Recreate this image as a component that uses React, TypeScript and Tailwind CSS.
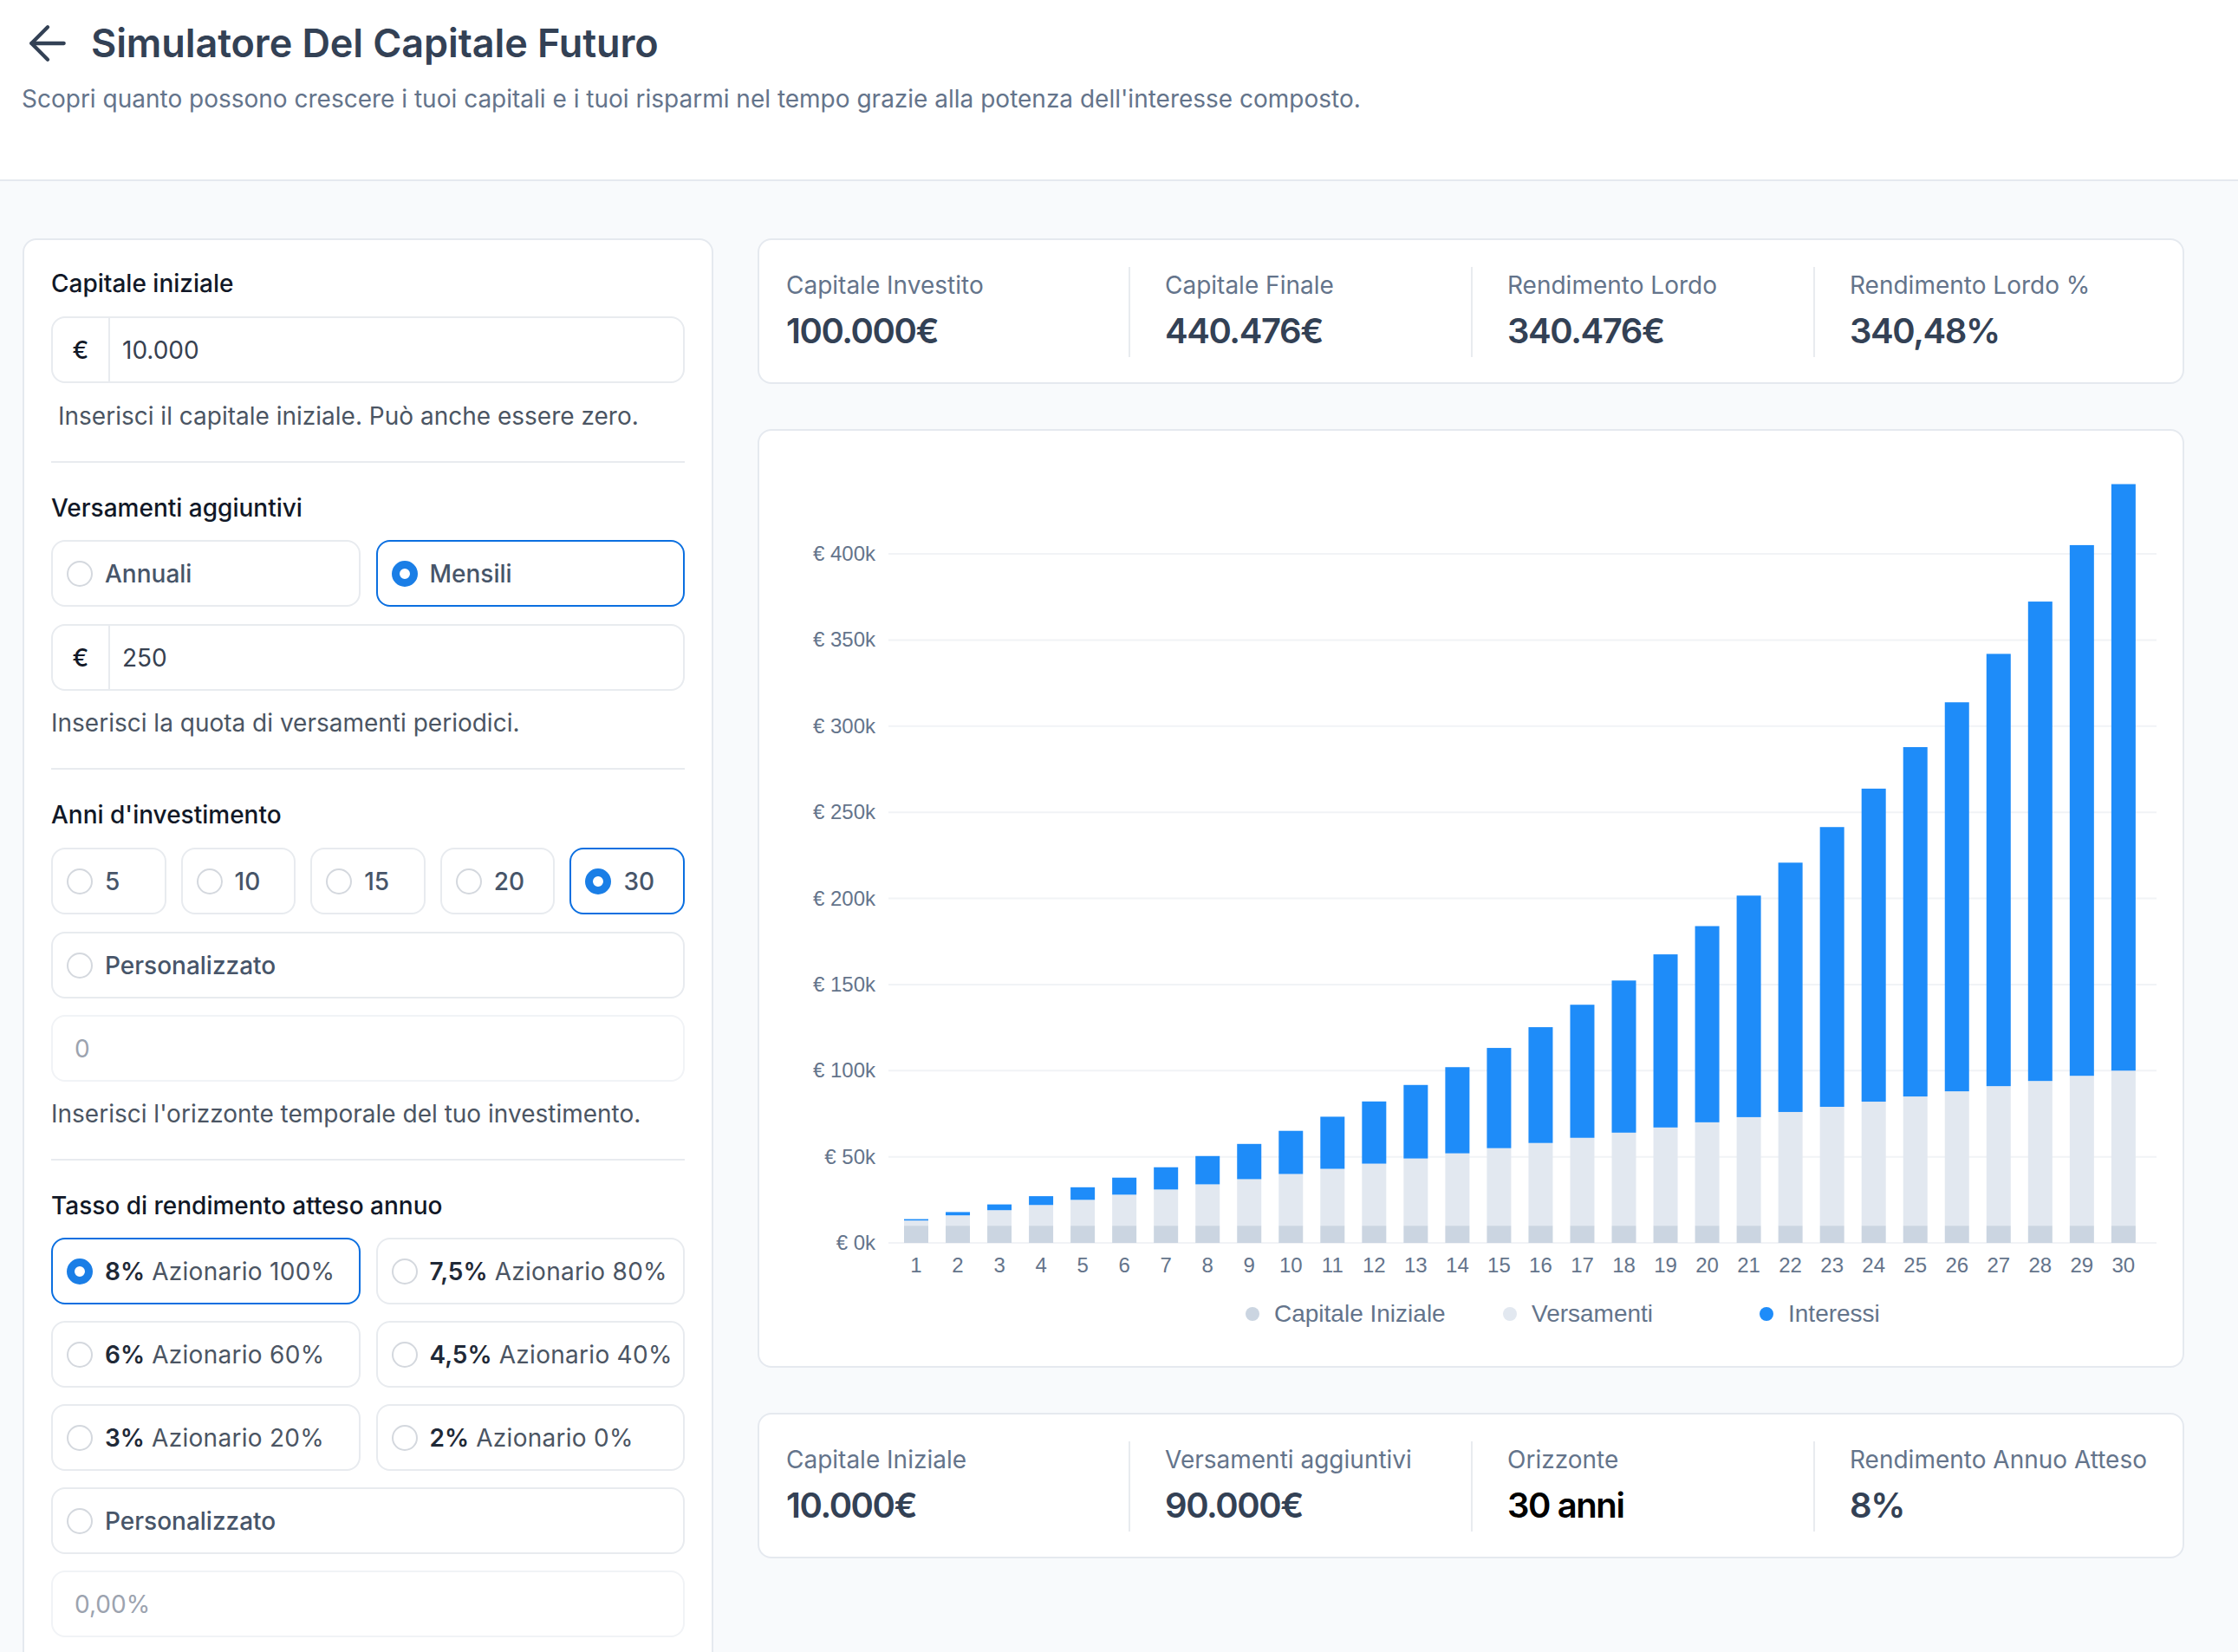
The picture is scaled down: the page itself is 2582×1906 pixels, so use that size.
import { ArrowLeft } from 'lucide-react';

const font = { fontFamily: 'Inter, "Noto Sans", sans-serif' };

const years = Array.from({ length: 30 }, (_, i) => i + 1);

const totalAt = (n: number) => 10000 * Math.pow(1.08, n) + 3000 * ((Math.pow(1.08, n) - 1) / 0.08);

// chart geometry (px inside the chart card)
const yOf = (v: number) => 937 - v * 0.0019875;
const xOf = (i: number) => 181 + 48.03 * i;

function Radio({ checked }: { checked?: boolean }) {
    return checked ? (
        <span className="w-[30px] h-[30px] rounded-full border-[9px] border-[#1a7ee6] bg-white shrink-0" />
    ) : (
        <span className="w-[30px] h-[30px] rounded-full border-2 border-[#d4d8de] bg-white shrink-0" />
    );
}

function Option({ checked, children, className = '' }: { checked?: boolean; children: React.ReactNode; className?: string }) {
    return (
        <div
            className={
                'flex items-center h-[77px] rounded-[16px] px-[16px] gap-[14px] bg-white ' +
                (checked ? 'border-2 border-[#0b6fe0] ' : 'border-2 border-[#e8ebef] ') +
                className
            }
        >
            <Radio checked={checked} />
            <span className="text-[28px] text-[#475569] font-medium">{children}</span>
        </div>
    );
}

function EuroInput({ value }: { value: string }) {
    return (
        <div className="flex h-[77px] rounded-[16px] border-2 border-[#e8ebef] bg-white overflow-hidden">
            <div className="w-[66px] flex items-center justify-center border-r-2 border-[#e8ebef] text-[28px] text-[#111827] font-medium">€</div>
            <div className="flex items-center pl-[14px] text-[28px] text-[#374151]">{value}</div>
        </div>
    );
}

function RateOption({ checked, rate, label }: { checked?: boolean; rate: string; label: string }) {
    return (
        <div
            className={
                'flex items-center h-[77px] rounded-[16px] px-[16px] gap-[14px] bg-white ' +
                (checked ? 'border-2 border-[#0b6fe0]' : 'border-2 border-[#e8ebef]')
            }
        >
            <Radio checked={checked} />
            <span className="text-[28px] whitespace-nowrap">
                <span className="font-semibold text-[#1f2937]">{rate}</span>
                <span className="text-[#4b5563] tracking-[0.01em]"> {label}</span>
            </span>
        </div>
    );
}

function StatsCard({ items }: { items: { label: string; value: string; dark?: boolean }[] }) {
    return (
        <div className="bg-white border-2 border-[#e5e9ef] rounded-[16px] h-[168px] px-[31px] pt-[31px]">
            <div className="grid grid-cols-4 h-[104px]">
                {items.map((it, i) => (
                    <div key={it.label} className={i > 0 ? 'border-l-2 border-[#e8ebef] pl-[40px]' : ''}>
                        <div className="text-[28px] leading-[36px] text-[#64748b] mt-[3px]">{it.label}</div>
                        <div className={'text-[40px] leading-[48px] font-semibold tracking-[-0.035em] mt-[11px] ' + (it.dark ? 'text-black' : 'text-[#334155]')}>
                            {it.value}
                        </div>
                    </div>
                ))}
            </div>
        </div>
    );
}

function Chart() {
    const ticks = [0, 50, 100, 150, 200, 250, 300, 350, 400];
    const legend = [
        { label: 'Capitale Iniziale', color: '#cbd5e1', x: 569 },
        { label: 'Versamenti', color: '#e2e8f0', x: 866 },
        { label: 'Interessi', color: '#1e8cf9', x: 1162 },
    ];
    return (
        <svg width="1642" height="1079" viewBox="0 0 1642 1079" style={{ fontFamily: '"Liberation Sans", Arial, sans-serif' }}>
            {ticks.map((t) => (
                <g key={t}>
                    <line x1="149" x2="1612" y1={yOf(t * 1000)} y2={yOf(t * 1000)} stroke="#f1f3f6" strokeWidth="2" />
                    <text x="134" y={yOf(t * 1000) + 8} textAnchor="end" fontSize="24" fill="#64748b">
                        € {t}k
                    </text>
                </g>
            ))}
            {years.map((n, i) => {
                const total = totalAt(n);
                const x = xOf(i) - 14;
                return (
                    <g key={n}>
                        <rect x={x} y={yOf(10000)} width="28" height={yOf(0) - yOf(10000)} fill="#cbd5e1" />
                        <rect x={x} y={yOf(10000 + 3000 * n)} width="28" height={yOf(10000) - yOf(10000 + 3000 * n)} fill="#e2e8f0" />
                        <rect x={x} y={yOf(total)} width="28" height={yOf(10000 + 3000 * n) - yOf(total)} fill="#1e8cf9" />
                        <text x={xOf(i)} y="971" textAnchor="middle" fontSize="24" fill="#64748b">
                            {n}
                        </text>
                    </g>
                );
            })}
            {legend.map((l) => (
                <g key={l.label}>
                    <circle cx={l.x} cy="1019" r="8" fill={l.color} />
                    <text x={l.x + 25} y="1028" fontSize="28" fill="#64748b">
                        {l.label}
                    </text>
                </g>
            ))}
        </svg>
    );
}

export default function App() {
    return (
        <div className="h-screen overflow-hidden bg-[#f8fafc]" style={font}>
            {/* Header */}
            <header className="bg-white border-b-2 border-[#e5e9ef] h-[209px] px-[25px] pt-[18px]">
                <div className="flex items-center gap-[18px] -ml-[2px]">
                    <ArrowLeft size={64} strokeWidth={1.6} className="text-[#334155]" />
                    <h1 className="text-[45px] leading-[56px] font-semibold tracking-[-0.002em] text-[#334155]">Simulatore Del Capitale Futuro</h1>
                </div>
                <p className="mt-[14px] text-[28px] leading-[36px] text-[#64748b]">
                    Scopri quanto possono crescere i tuoi capitali e i tuoi risparmi nel tempo grazie alla potenza dell'interesse composto.
                </p>
            </header>

            <main className="flex items-start gap-[51px] pl-[26px] pt-[66px]">
                {/* Form */}
                <aside className="w-[797px] shrink-0 bg-white border-2 border-[#e5e9ef] rounded-[16px] px-[31px] pt-[32px] pb-[32px]">
                    <h3 className="text-[28px] leading-[36px] font-medium text-[#111827]">Capitale iniziale</h3>
                    <div className="mt-[20px]">
                        <EuroInput value="10.000" />
                    </div>
                    <p className="mt-[20px] pl-[8px] text-[28px] leading-[36px] text-[#4b5563]">Inserisci il capitale iniziale. Può anche essere zero.</p>

                    <div className="my-[34px] border-t-2 border-[#e8ebef]" />

                    <h3 className="text-[28px] leading-[36px] font-medium text-[#111827]">Versamenti aggiuntivi</h3>
                    <div className="mt-[19px] grid grid-cols-2 gap-[18px]">
                        <Option>Annuali</Option>
                        <Option checked>Mensili</Option>
                    </div>
                    <div className="mt-[20px]">
                        <EuroInput value="250" />
                    </div>
                    <p className="mt-[19px] text-[28px] leading-[36px] text-[#4b5563]">Inserisci la quota di versamenti periodici.</p>

                    <div className="my-[34px] border-t-2 border-[#e8ebef]" />

                    <h3 className="text-[28px] leading-[36px] font-medium text-[#111827]">Anni d'investimento</h3>
                    <div className="mt-[20px] grid grid-cols-5 gap-[17px]">
                        <Option>5</Option>
                        <Option>10</Option>
                        <Option>15</Option>
                        <Option>20</Option>
                        <Option checked>30</Option>
                    </div>
                    <div className="mt-[20px]">
                        <Option>Personalizzato</Option>
                    </div>
                    <div className="mt-[19px] h-[77px] rounded-[16px] border-2 border-[#f1f3f6] flex items-center pl-[25px] text-[28px] text-[#9ca3af]">0</div>
                    <p className="mt-[19px] text-[28px] leading-[36px] text-[#4b5563]">Inserisci l'orizzonte temporale del tuo investimento.</p>

                    <div className="my-[34px] border-t-2 border-[#e8ebef]" />

                    <h3 className="text-[28px] leading-[36px] font-medium text-[#111827]">Tasso di rendimento atteso annuo</h3>
                    <div className="mt-[19px] grid grid-cols-2 gap-x-[18px] gap-y-[19px]">
                        <RateOption checked rate="8%" label="Azionario 100%" />
                        <RateOption rate="7,5%" label="Azionario 80%" />
                        <RateOption rate="6%" label="Azionario 60%" />
                        <RateOption rate="4,5%" label="Azionario 40%" />
                        <RateOption rate="3%" label="Azionario 20%" />
                        <RateOption rate="2%" label="Azionario 0%" />
                        <div className="col-span-2">
                            <Option>Personalizzato</Option>
                        </div>
                        <div className="col-span-2 h-[77px] rounded-[16px] border-2 border-[#f1f3f6] flex items-center pl-[25px] text-[28px] text-[#9ca3af]">0,00%</div>
                    </div>
                </aside>

                {/* Results */}
                <section className="w-[1646px] shrink-0 flex flex-col gap-[52px]">
                    <StatsCard
                        items={[
                            { label: 'Capitale Investito', value: '100.000€' },
                            { label: 'Capitale Finale', value: '440.476€' },
                            { label: 'Rendimento Lordo', value: '340.476€' },
                            { label: 'Rendimento Lordo %', value: '340,48%' },
                        ]}
                    />
                    <div className="bg-white border-2 border-[#e5e9ef] rounded-[16px] h-[1083px] overflow-hidden">
                        <Chart />
                    </div>
                    <StatsCard
                        items={[
                            { label: 'Capitale Iniziale', value: '10.000€' },
                            { label: 'Versamenti aggiuntivi', value: '90.000€' },
                            { label: 'Orizzonte', value: '30 anni', dark: true },
                            { label: 'Rendimento Annuo Atteso', value: '8%' },
                        ]}
                    />
                </section>
            </main>
        </div>
    );
}
